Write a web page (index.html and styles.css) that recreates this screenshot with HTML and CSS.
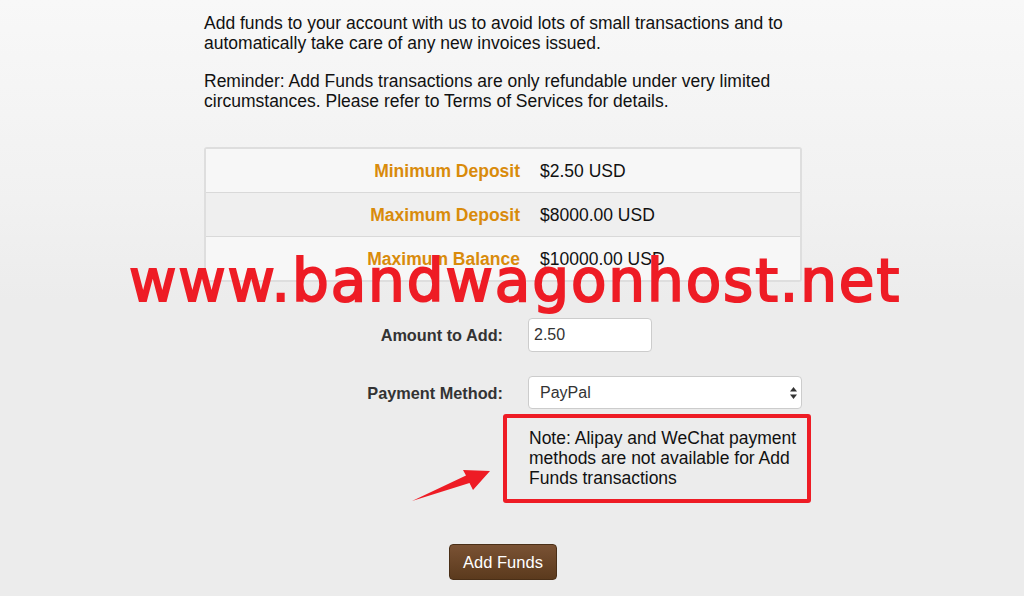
FILE: index.html
```html
<!DOCTYPE html>
<html lang="en">
<head>
    <meta charset="UTF-8">
    <title>Add Funds</title>
    <link rel="stylesheet" href="styles.css">
</head>
<body>
<div id="contain">
    <p>Add funds to your account with us to avoid lots of small transactions and to automatically take care of any new invoices issued.</p>
    <p>Reminder: Add Funds transactions are only refundable under very limited circumstances. Please refer to Terms of Services for details.</p>

    <div class="limits">
        <div class="row">
            <span class="label">Minimum Deposit</span>
            <span class="value">$2.50 USD</span>
        </div>
        <div class="row alt">
            <span class="label">Maximum Deposit</span>
            <span class="value">$8000.00 USD</span>
        </div>
        <div class="row">
            <span class="label">Maximum Balance</span>
            <span class="value">$10000.00 USD</span>
        </div>
    </div>

    <form class="addfunds">
        <label for="amount">Amount to Add:</label>
        <input id="amount" class="amount" type="text" value="2.50">

        <label for="gateway">Payment Method:</label>
        <div class="selectbox">
            <select id="gateway">
                <option>PayPal</option>
                <option>Credit Card</option>
            </select>
            <svg class="caret" width="9" height="14" viewBox="0 0 9 14">
                <path d="M4.5 1 L8 5.5 H1 Z" fill="#333"/>
                <path d="M4.5 13 L8 8.5 H1 Z" fill="#333"/>
            </svg>
        </div>

        <div></div>
        <div class="note">
            Note: Alipay and WeChat payment methods are not available for Add Funds transactions
            <svg class="arrow" width="90" height="50" viewBox="0 0 90 50">
                <path d="M7 46 L61 20.5 L58 15 L85 16 L68 35 L64.5 28 Z" fill="#ee1c25"/>
            </svg>
        </div>

        <div class="submit">
            <button type="button">Add Funds</button>
        </div>
    </form>

    <div class="watermark">www.bandwagonhost.net</div>
</div>
</body>
</html>
```

FILE: styles.css
```css
*{
    margin: 0;
    padding: 0;
    box-sizing: border-box;
}
html,body{
    height: 100%;
}
body{
    background: linear-gradient(#f8f8f8 0, #f1f1f1 200px, #ececec 300px) no-repeat, #ececec;
    font-family: "Liberation Sans", Arial, Helvetica, sans-serif;
    font-size: 17.5px;
    line-height: 20px;
    color: #111;
    overflow: hidden;
}
#contain{
    width: 616px;
    margin: 0 auto;
    padding: 13px 18px 0 0;
    position: relative;
}
#contain p{
    margin-bottom: 18px;
}

/* limits table */
.limits{
    margin-top: 36px;
    border: 2px solid #dedede;
    border-radius: 3px;
}
.limits .row{
    display: grid;
    grid-template-columns: 326px 1fr;
    height: 44px;
    align-items: center;
    background: #f7f7f7;
    border-top: 1px solid #d9d9d9;
}
.limits .row:first-child{
    border-top: 0;
    height: 43px;
}
.limits .row.alt{
    background: #efefef;
}
.limits .label{
    text-align: right;
    padding-right: 12px;
    font-weight: bold;
    color: #d98b0b;
}
.limits .value{
    padding-left: 8px;
    color: #111;
}

/* form */
.addfunds{
    display: grid;
    grid-template-columns: 299px 1fr;
    column-gap: 25px;
    row-gap: 24px;
    align-items: center;
    margin-top: 36px;
}
.addfunds label{
    text-align: right;
    font-size: 16.3px;
    font-weight: bold;
    color: #333;
}
.addfunds .amount{
    width: 124px;
    height: 34px;
    padding: 0 5px;
    border: 1px solid #cccccc;
    border-radius: 4px;
    background: #fff;
    font: inherit;
    font-size: 16px;
    color: #333;
}
.selectbox{
    position: relative;
}
.selectbox select{
    display: block;
    width: 100%;
    height: 33px;
    padding: 0 11px;
    border: 1px solid #cccccc;
    border-radius: 4px;
    background: #fff;
    font: inherit;
    font-size: 16px;
    color: #333;
    appearance: none;
    -webkit-appearance: none;
}
.selectbox .caret{
    position: absolute;
    right: 4px;
    top: 10px;
}
.note{
    position: relative;
    margin-top: -7px;
    padding: 2px 0 0 1px;
    color: #111;
}
.note::before{
    content: "";
    position: absolute;
    left: -25px;
    top: -12px;
    right: -9px;
    bottom: -15px;
    border: 4px solid #ee1c25;
    border-radius: 3px;
}
.note .arrow{
    position: absolute;
    left: -123px;
    top: 29px;
}
.submit{
    grid-column: 1 / 3;
    text-align: center;
    padding-top: 32px;
}
.submit button{
    width: 108px;
    height: 36px;
    border: 1px solid #4a2f17;
    border-radius: 4px;
    background: linear-gradient(#7a5234, #5b3a1d);
    color: #fff;
    font: inherit;
    font-size: 16.5px;
    cursor: pointer;
}

/* watermark */
.watermark{
    position: absolute;
    left: -100px;
    right: -100px;
    top: 246px;
    text-align: center;
    font-family: "DejaVu Sans", sans-serif;
    font-size: 58px;
    line-height: 70px;
    letter-spacing: 1.9px;
    color: #ee1c25;
    -webkit-text-stroke: 2px #ee1c25;
    padding-left: 6px;
}
```
